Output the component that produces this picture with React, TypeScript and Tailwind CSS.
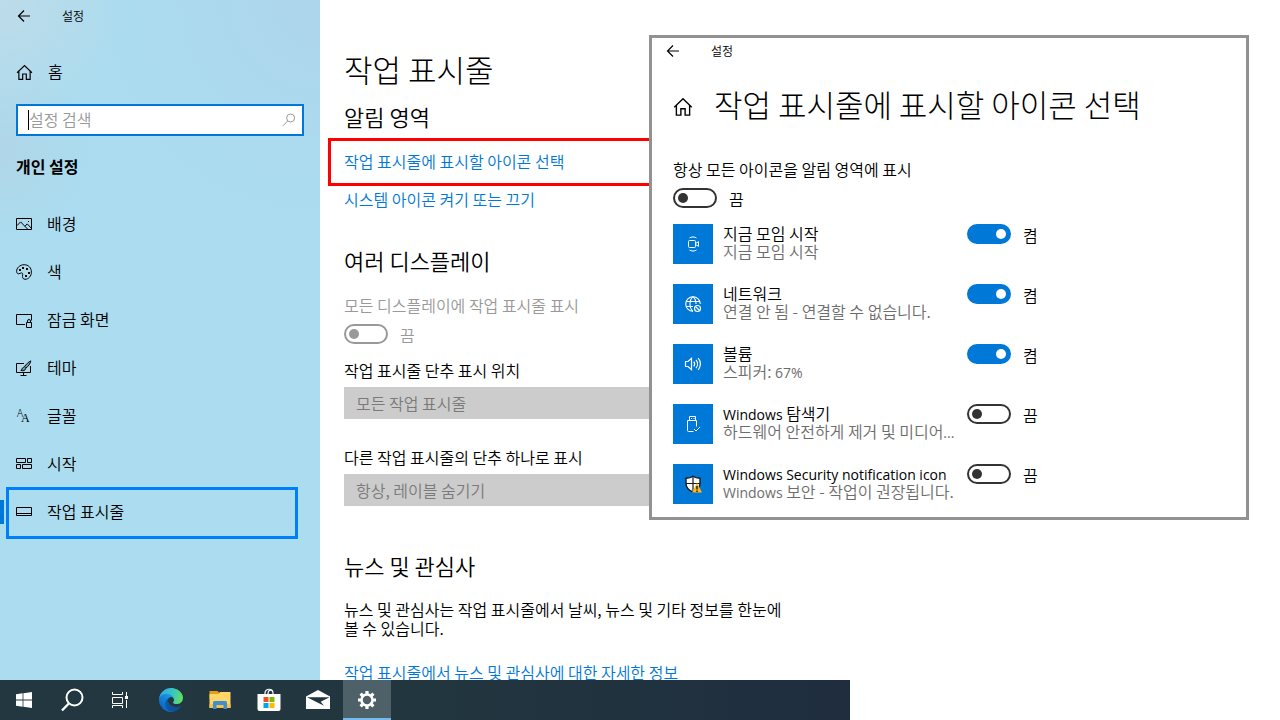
import React from 'react';
import { clsx } from 'clsx';

interface IconProps {
  className?: string;
}

const Svg: React.FC<React.SVGProps<SVGSVGElement>> = ({ children, ...rest }) => (
  <svg viewBox="0 0 16 16" width={16} height={16} fill="none" stroke="currentColor" overflow="visible" aria-hidden="true" {...rest}>
    {children}
  </svg>
);

const BackIcon = () => (
  <Svg width={14} height={14} viewBox="0 0 14 14" strokeWidth={1.2}>
    <path d="M13 7H1.5M7 1.5 1.5 7 7 12.5" />
  </Svg>
);

const HomeIcon: React.FC<{ size: number }> = ({ size }) => (
  <Svg width={size} height={size} strokeWidth={1.1}>
    <path d="M1 8.2 8 1.4l7 6.8M2.7 6.8v7.7h3.6V9.4h3.4v5.1h3.6V6.8" />
  </Svg>
);

const SearchIcon: React.FC<IconProps> = ({ className }) => (
  <Svg width={14} height={14} viewBox="0 0 14 14" className={className}>
    <circle cx="8.6" cy="5" r="4" />
    <path d="M5.6 8 1 12.8" />
  </Svg>
);

// Sidebar icons
const PictureIcon = () => (
  <Svg>
    <path d="M.5 2.5h15v11H.5z" />
    <path d="m1 9.6 3.6-3.7 7 7.2M9 10.2l2.2-2.3 4 4.2" />
    <path d="M12 5.5h1" />
  </Svg>
);

const PaletteIcon = () => (
  <Svg>
    <path d="M8.2.7C3.7.7.6 4 .6 7.4c0 1.5.9 2.4 2 2.4 1.3 0 1.8-.9 2.8-.9 1.2 0 1.5 1 1.2 2.2-.4 1.6-.1 4.2 2.4 4.2 3.6 0 6.4-3.2 6.4-7.2 0-4.3-3-7.4-7.2-7.4z" />
    <g fill="currentColor" stroke="none">
      <path d="M3 5h2v2H3zM6 3h2v2H6zM10 4h2v2h-2zM12 8h2v2h-2zM9 11h2v2H9z" />
    </g>
  </Svg>
);

const LockScreenIcon = () => (
  <Svg>
    <path d="M9 12.5H.5v-10h15v6" />
    <path d="M10.5 10.5h5v5h-5zM11.5 10.5V9a1.5 1.5 0 0 1 3 0v1.5" />
  </Svg>
);

const ThemeIcon = () => (
  <Svg>
    <path d="M8 3.5H.5v9h14V6M7.5 12.5v3M4.5 15.5h6" />
    <path d="M14.8.9c-2 .8-4.7 3.3-6.4 5.9l1.4 1.3c2.5-1.7 4.7-4.7 5-7.2zM8.2 7.2c-1.4.1-2 1-2.2 2-.1.7-.6 1-1.2 1.2 2 .8 4.6.2 5-2" fill="#7d97a3" />
  </Svg>
);

const FontsIcon = () => (
  <Svg fill="currentColor" stroke="none">
    <text x="1" y="9" fontSize="10" className="font-['Noto_Sans',sans-serif]">A</text>
    <text x="5" y="14" fontSize="12" fontWeight="400" className="font-['Liberation_Serif',serif]">A</text>
  </Svg>
);

const StartIcon = () => (
  <Svg>
    <path d="M.5 2.5h9v4h-9zM11.5 2.5h4v4h-4zM.5 8.5h4v4h-4zM6.5 8.5h9v4h-9z" />
  </Svg>
);

const TaskbarIcon = () => (
  <Svg>
    <path d="M.5 3.5h15v8H.5zM.5 9.5h15" />
  </Svg>
);

// Tray icons
const MeetIcon = () => (
  <Svg>
    <rect x="3.5" y="4.5" width="7" height="7" rx="1" />
    <path d="m10.5 7.5 3-1.8v4.6l-3-1.8" />
    <path d="M4.5 2C6 .6 10 .6 11.5 2M4.5 14c1.5 1.4 5.500 1.400 7 0" />
  </Svg>
);

const NetworkIcon = () => (
  <Svg strokeWidth={1.1}>
    <path d="M15.3 8A7.3 7.3 0 1 0 8 15.3" />
    <path d="M8 .7C4 4 4 12 8 15.3M8 .7c2 1.7 3 4.300 3 7.300M1.200 5.500h13.600M1.200 10.500H8" />
    <circle cx="12.5" cy="12.5" r="3" />
    <path d="m10.5 10.5 4 4" />
  </Svg>
);

const VolumeIcon = () => (
  <Svg strokeWidth={1.2}>
    <path d="M.5 5.5H3L6.5 2.3v11.4L3 10.5H.5z" />
    <path d="M8.8 5.6c1 1.4 1 3.4 0 4.800M11 3.800c2 2.400 2 6 0 8.400M13.200 2.200c2.900 3.300 2.900 8.300 0 11.600" />
  </Svg>
);

const UsbIcon = () => (
  <Svg>
    <path d="M4.5 4.5v-4h6v4M6 2.5h1M8.5 2.5h1" />
    <path d="M8.5 15.5h-5a1 1 0 0 1-1-1v-10h9v6M9 13l2 2 4-4" />
  </Svg>
);

const ShieldIcon = () => (
  <Svg width={18} height={18} viewBox="0 0 18 18">
    <path d="M9 1.2c2 1.5 4.3 2 7 2v5c0 4-2.5 7-7 8.8-4.5-1.8-7-4.8-7-8.8v-5c2.7 0 5-.5 7-2z" fill="#fff" stroke="#1a1a1a" strokeWidth="1.4" />
    <path d="M9 1.5v15M2 8.5h14" stroke="#1a1a1a" strokeWidth="1.2" />
    <path d="m13 8 5 9.500H8z" fill="#ffb81c" stroke="none" />
    <path d="M13 11v3.500M13 15.500V17" stroke="#1a1a1a" strokeWidth="1.4" />
  </Svg>
);

// Taskbar icons
const WindowsLogo = () => (
  <svg width="16" height="16" viewBox="0 0 16 16" fill="#fff" aria-hidden="true">
    <path d="M0 2.2 6.6 1.3v6.3H0zM7.4 1.2 16 0v7.6H7.4zM0 8.4h6.6v6.3L0 13.8zM7.4 8.4H16V16l-8.6-1.2z" />
  </svg>
);

const TaskbarSearchIcon = () => (
  <svg width="24" height="24" viewBox="0 0 24 24" fill="none" stroke="#fff" strokeWidth="2" aria-hidden="true">
    <circle cx="14.5" cy="9.5" r="8" />
    <path d="M8.8 15.5 2 22.5" strokeWidth="2.4" />
  </svg>
);

const TaskViewIcon = () => (
  <svg width="16" height="16" viewBox="0 0 16 16" fill="none" stroke="#fff" aria-hidden="true">
    <path d="M.5 0v2.5h10V0M.5 16v-2.5h10V16M.5 5.5h10v6H.5zM14.5 0v4M14.5 8v8" />
    <path d="M13 4h3v3h-3z" fill="#fff" stroke="none" />
  </svg>
);

const EdgeIcon = () => (
  <svg width="24" height="24" viewBox="0 0 256 256" aria-hidden="true">
    <defs>
      <linearGradient id="edge-a" x1="60" y1="178" x2="240" y2="178" gradientUnits="userSpaceOnUse">
        <stop offset="0" stopColor="#0c59a4" />
        <stop offset="1" stopColor="#114a8b" />
      </linearGradient>
      <linearGradient id="edge-b" x1="150" y1="90" x2="50" y2="230" gradientUnits="userSpaceOnUse">
        <stop offset="0" stopColor="#1b9de2" />
        <stop offset=".4" stopColor="#1484d6" />
        <stop offset="1" stopColor="#0a66c2" />
      </linearGradient>
      <linearGradient id="edge-c" x1="20" y1="60" x2="250" y2="120" gradientUnits="userSpaceOnUse">
        <stop offset="0" stopColor="#35a8e8" />
        <stop offset=".5" stopColor="#36c6c3" />
        <stop offset="1" stopColor="#66e05a" />
      </linearGradient>
    </defs>
    <path fill="url(#edge-a)" d="M231 190.5c-3.4 1.8-6.9 3.4-10.5 4.7a101.5 101.5 0 0 1-35.9 6.5c-47.3 0-88.5-32.5-88.5-74.3a31.5 31.5 0 0 1 16.4-27.3c-42.8 1.8-53.8 46.4-53.8 72.5 0 73.9 68 81.3 82.7 81.3 7.9 0 19.8-2.3 27-4.6l1.3-.4a128.3 128.3 0 0 0 66.6-52.8 4 4 0 0 0-5.3-5.6z" />
    <path fill="url(#edge-b)" d="M105.7 241.4a79.2 79.2 0 0 1-22.7-21.3 80.7 80.7 0 0 1 29.5-120c3.2-1.5 8.5-4.1 15.6-4a32.4 32.4 0 0 1 25.7 13 31.9 31.9 0 0 1 6.3 18.7c0-.2 24.5-79.6-80-79.6-43.9 0-80 41.6-80 78.2a130.2 130.2 0 0 0 12.1 56 128 128 0 0 0 156.4 67 75.5 75.5 0 0 1-62.8-8z" />
    <path fill="url(#edge-c)" d="M152.3 148.9c-.9 1-3.4 2.5-3.4 5.6 0 2.6 1.7 5.1 4.7 7.2 14.4 10 41.5 8.7 41.6 8.7 10.7 0 21.1-2.9 30.3-8.3a61.4 61.4 0 0 0 30.4-52.9c.3-22.4-8-37.3-11.3-43.9C223.5 23.9 177.7 0 128 0A128 128 0 0 0 0 126.2c.5-36.5 36.8-66 80-66 3.5 0 23.5.3 42 10a72.6 72.6 0 0 1 30.9 29.3c6.1 10.6 7.2 24.1 7.2 29.5s-2.7 13.3-7.8 19.9z" />
  </svg>
);

const ExplorerIcon = () => (
  <svg width="22" height="20" viewBox="0 0 22 20" aria-hidden="true">
    <path d="M.5 1h8l2 2H21v6H.5z" fill="#e3a011" />
    <path d="M.5 4h9l1.5-2h10.500v16H.500z" fill="#ffd667" />
    <path d="M.5 14h21v4H.5z" fill="#f7c14a" />
    <path d="M4 19v-6.5A1.5 1.5 0 0 1 5.5 11h11a1.5 1.5 0 0 1 1.5 1.5V19h-3.5v-4h-7v4z" fill="#3f8fd2" />
  </svg>
);

const StoreIcon = () => (
  <svg width="24" height="24" viewBox="0 0 24 24" aria-hidden="true">
    <path d="M8 8V5c0-5 8-5 8 0v3M11 6c0-5 5-5 5-1" fill="none" stroke="#fff" strokeWidth="1.2" />
    <path d="M.5 6h23v15a2 2 0 0 1-2 2h-19a2 2 0 0 1-2-2z" fill="#fff" />
    <path d="M6.5 9h5v5h-5z" fill="#f25022" />
    <path d="M12.5 9h5v5h-5z" fill="#7fba00" />
    <path d="M6.5 15h5v5h-5z" fill="#00a4ef" />
    <path d="M12.5 15h5v5h-5z" fill="#ffb900" />
  </svg>
);

const MailIcon = () => (
  <svg width="24" height="20" viewBox="0 0 24 20" aria-hidden="true">
    <path d="M0 6.5 12 0l12 6.5V19H0z" fill="#fff" />
    <path d="M1 7.200h22.500l-8.800 4.600 3.300 4z" fill="#22363f" />
  </svg>
);

const GearIcon = () => (
  <svg width="20" height="20" viewBox="0 0 20 20" fill="none" stroke="#fff" aria-hidden="true">
    <circle cx="10" cy="10" r="5.5" strokeWidth="2.6" />
    <path
      d="M10 4.5V1M10 19v-3.5M1 10h3.5M15.5 10H19M3.6 3.6l2.5 2.5M13.9 13.9l2.5 2.5M3.6 16.4l2.5-2.5M13.9 6.1l2.5-2.5"
      strokeWidth="3.2"
    />
  </svg>
);

interface ToggleProps {
  id: string;
  label?: string;
  checked?: boolean;
  disabled?: boolean;
}

const Toggle: React.FC<ToggleProps> = ({ id, label, checked = false, disabled = false }) => {
  const [on, setOn] = React.useState(checked);
  return (
    <div className="flex items-start gap-3">
      <input
        id={id}
        type="checkbox"
        role="switch"
        aria-label={label}
        checked={on}
        disabled={disabled}
        onChange={(e) => setOn(e.target.checked)}
        className="flex h-5 w-11 shrink-0 appearance-none items-center rounded-full border-2 border-[#333] px-[3px] before:block before:size-2.5 before:rounded-full before:bg-[#333] checked:justify-end checked:border-[#0078d7] checked:bg-[#0078d7] checked:before:bg-white disabled:border-[#999] disabled:before:bg-[#999]"
      />
      <span className={clsx('mt-px leading-5', disabled ? 'text-[#999]' : 'text-black')}>{on ? '켬' : '끔'}</span>
    </div>
  );
};

// Latin runs inside Korean text use their own face
const Latin: React.FC<{ children: React.ReactNode }> = ({ children }) => (
  <span className="font-['Open_Sans',sans-serif] text-sm leading-none font-normal">{children}</span>
);

const navItems = [
  { label: '배경', icon: <PictureIcon /> },
  { label: '색', icon: <PaletteIcon /> },
  { label: '잠금 화면', icon: <LockScreenIcon /> },
  { label: '테마', icon: <ThemeIcon /> },
  { label: '글꼴', icon: <FontsIcon /> },
  { label: '시작', icon: <StartIcon /> },
  { label: '작업 표시줄', icon: <TaskbarIcon />, active: true },
];

const trayItems = [
  { id: 'meet', name: '지금 모임 시작', detail: '지금 모임 시작', icon: <MeetIcon />, on: true },
  { id: 'network', name: '네트워크', detail: '연결 안 됨 - 연결할 수 없습니다.', icon: <NetworkIcon />, on: true },
  { id: 'volume', name: '볼륨', detail: <>스피커: <Latin>67%</Latin></>, icon: <VolumeIcon />, on: true },
  { id: 'explorer', name: <><Latin>Windows</Latin> 탐색기</>, detail: <>하드웨어 안전하게 제거 및 미디어<Latin>...</Latin></>, icon: <UsbIcon />, on: false },
  { id: 'security', name: <Latin>Windows Security notification icon</Latin>, detail: <><Latin>Windows</Latin> 보안 - 작업이 권장됩니다.</>, icon: <ShieldIcon />, on: false },
];

const Sidebar = () => (
  <aside className="w-80 shrink-0 bg-[#abdcef] bg-[radial-gradient(circle_at_0_0,#bedbe9_0,transparent_130px),radial-gradient(circle_at_0_150px,#b0d6e8_0,transparent_90px),radial-gradient(circle_at_100%_0,#add5ec_0,transparent_220px)]">
    <div className="flex h-8 items-center gap-[31px] pl-[17px] text-xs">
      <button type="button" aria-label="뒤로"><BackIcon /></button>
      <span>설정</span>
    </div>
    <a href="#home" className="mt-4 flex h-12 items-center gap-[15px] pl-4">
      <HomeIcon size={17} />
      <span className="pb-0.5">홈</span>
    </a>
    <div className="mx-4 mt-2 flex h-8 items-center border-2 border-[#0078d7] bg-white pr-1.5 pl-2.5">
      <span className="h-5 w-px bg-black" />
      <input type="text" aria-label="설정 검색" placeholder="설정 검색" className="min-w-0 flex-1 pb-0.5 leading-5 outline-none placeholder:text-[#999]" />
      <SearchIcon className="text-[#999]" />
    </div>
    <h2 className="mt-5 pl-4 leading-5 font-bold">개인 설정</h2>
    <nav className="mt-6">
      {navItems.map((item) => (
        <a
          key={item.label}
          href="#nav"
          aria-current={item.active ? 'page' : undefined}
          className="relative flex h-12 items-center gap-[15px] pl-4"
        >
          {item.icon}
          <span className="pb-0.5">{item.label}</span>
          {item.active && (
            <>
              <span className="absolute top-3 left-0 h-6 w-1 bg-[#0078d7]" />
              <span className="absolute -top-px right-[22px] -bottom-[3px] left-1.5 border-3 border-[#0080f8]" />
            </>
          )}
        </a>
      ))}
    </nav>
  </aside>
);

const selectClass = 'mt-[7px] block h-8 w-80 appearance-none bg-[#ccc] px-3 text-[#7a7a7a] opacity-100';

const TaskbarSettings = () => (
  <main className="min-w-0 flex-1 pt-[49px] pl-6">
    <h1 className="text-[31px] leading-10 font-light">작업 표시줄</h1>

    <h2 className="mt-[13px] text-[22px] leading-7">알림 영역</h2>
    <div className="mt-2 -ml-4 flex h-12 max-w-[400px] items-center border-3 border-[#f00] pb-0.5 pl-[13px]">
      <a href="#icons" className="leading-5 text-[#0078d7]">작업 표시줄에 표시할 아이콘 선택</a>
    </div>
    <a href="#system" className="mt-[3px] block leading-5 text-[#0078d7]">시스템 아이콘 켜기 또는 끄기</a>

    <h2 className="mt-[37px] text-[22px] leading-7">여러 디스플레이</h2>
    <label htmlFor="all-displays" className="mt-[21px] mb-[9px] block leading-5 text-[#999]">모든 디스플레이에 작업 표시줄 표시</label>
    <Toggle id="all-displays" disabled />

    <label htmlFor="button-place" className="mt-[15px] block leading-5">작업 표시줄 단추 표시 위치</label>
    <select id="button-place" disabled className={selectClass}>
      <option>모든 작업 표시줄</option>
    </select>
    <label htmlFor="combine" className="mt-7 block leading-5">다른 작업 표시줄의 단추 하나로 표시</label>
    <select id="combine" disabled className={selectClass}>
      <option>항상, 레이블 숨기기</option>
    </select>

    <h2 className="mt-[45px] text-[22px] leading-7">뉴스 및 관심사</h2>
    <p className="mt-[21px] max-w-[450px] leading-[19px] break-keep">
      뉴스 및 관심사는 작업 표시줄에서 날씨, 뉴스 및 기타 정보를 한눈에 볼 수 있습니다.
    </p>
    <a href="#news" className="mt-6 block leading-5 text-[#0078d7]">작업 표시줄에서 뉴스 및 관심사에 대한 자세한 정보</a>
  </main>
);

const IconPicker = () => (
  <section className="absolute top-[35px] right-[31px] w-[600px] border-3 border-[#929292] bg-white pb-[13px]">
    <div className="flex h-[26px] items-center gap-[31px] pl-3.5 text-xs">
      <button type="button" aria-label="뒤로"><BackIcon /></button>
      <span>설정</span>
    </div>
    <div className="px-[21px]">
      <div className="mt-5 flex items-center gap-[21px]">
        <a href="#home" aria-label="홈" className="pt-1.5"><HomeIcon size={20} /></a>
        <h1 className="text-[31px] leading-10 font-light">작업 표시줄에 표시할 아이콘 선택</h1>
      </div>
      <label htmlFor="show-all" className="mt-[35px] mb-[9px] block leading-5">항상 모든 아이콘을 알림 영역에 표시</label>
      <Toggle id="show-all" />
      <ul className="mt-[15px] flex flex-col gap-5">
        {trayItems.map((item) => (
          <li key={item.id} className="flex h-10 items-start">
            <span className="flex size-10 shrink-0 items-center justify-center bg-[#0078d7] text-white">{item.icon}</span>
            <label htmlFor={item.id} className="w-[254px] pl-2.5 leading-[18px] whitespace-nowrap">
              <span className="block h-[18px]">{item.name}</span>
              <span className="block h-[18px] text-[#6d6d6d]">{item.detail}</span>
            </label>
            <Toggle id={item.id} checked={item.on} />
          </li>
        ))}
      </ul>
    </div>
  </section>
);

const pinnedApps = [
  { label: 'Edge', icon: <EdgeIcon /> },
  { label: '파일 탐색기', icon: <ExplorerIcon /> },
  { label: 'Store', icon: <StoreIcon /> },
  { label: '메일', icon: <MailIcon /> },
  { label: '설정', icon: <GearIcon />, active: true },
];

const WindowsTaskbar = () => (
  <footer className="flex h-10 w-full max-w-[850px] shrink-0 bg-linear-to-r from-[#22373f] via-[#22363f] to-[#1f2d3f]">
    <button type="button" aria-label="시작" className="flex w-12 items-center justify-center"><WindowsLogo /></button>
    <button type="button" aria-label="검색" className="flex w-12 items-center justify-center"><TaskbarSearchIcon /></button>
    <button type="button" aria-label="작업 보기" className="flex w-12 items-center justify-center"><TaskViewIcon /></button>
    <div className="ml-[3px] flex gap-px">
      {pinnedApps.map((app) => (
        <button
          key={app.label}
          type="button"
          aria-label={app.label}
          className={clsx(
            'flex w-12 items-center justify-center border-y-2 border-transparent',
            app.active && 'border-t-[#4e6168] border-b-[#76b9ed] bg-[#4e6168]',
          )}
        >
          {app.icon}
        </button>
      ))}
    </div>
  </footer>
);

export default function App() {
  return (
    <div className="relative flex h-screen flex-col overflow-hidden bg-white font-['Noto_Sans_CJK_KR',sans-serif] text-base font-[350] text-black">
      <div className="flex min-h-0 flex-1 overflow-hidden">
        <Sidebar />
        <TaskbarSettings />
      </div>
      <WindowsTaskbar />
      <IconPicker />
    </div>
  );
}
